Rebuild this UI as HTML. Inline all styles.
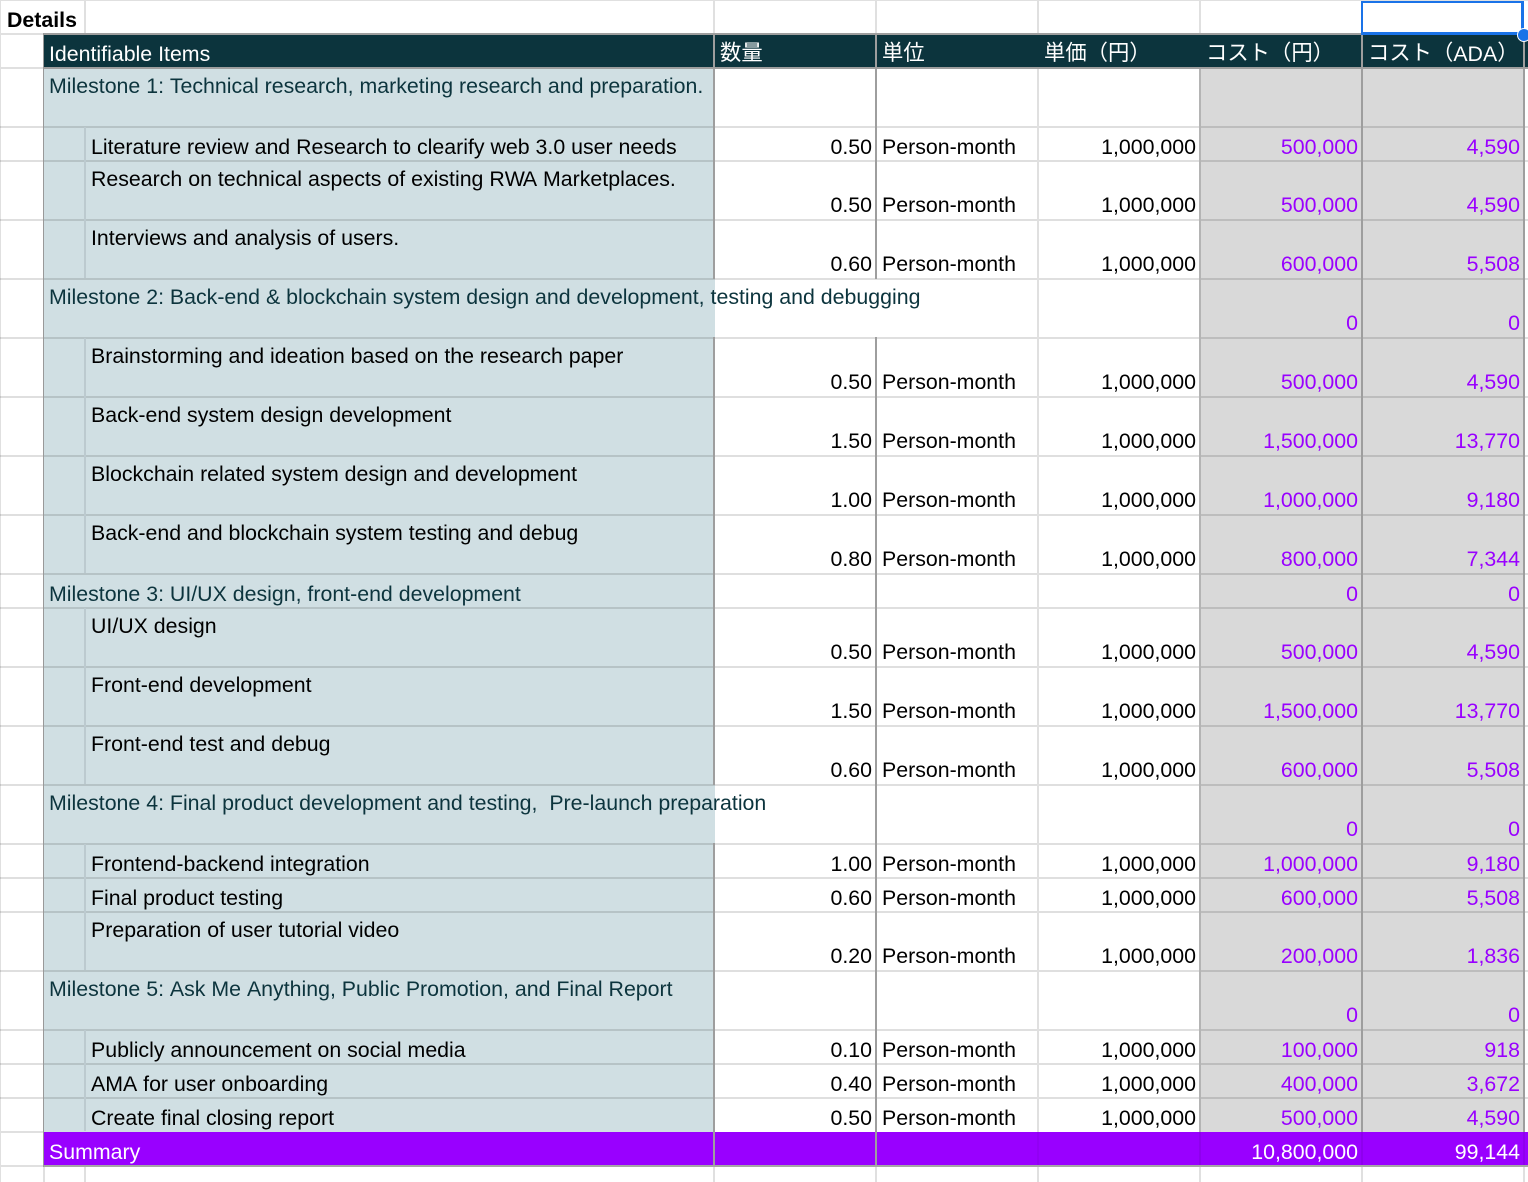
<!DOCTYPE html>
<html lang="ja"><head><meta charset="utf-8"><title>Details</title>
<style>
html,body{margin:0;padding:0;background:#fff}
#p{position:relative;width:1528px;height:1182px;overflow:hidden;background:#fff;font:21.33px/24px "Liberation Sans","Noto Sans CJK JP",sans-serif;color:#000;font-kerning:none}
.f,.v,.r,.r span,.h{position:absolute}
.r{left:0;width:1528px;box-sizing:border-box;border-top:2px solid rgba(0,0,0,.125)}
.r span{white-space:nowrap;bottom:2px}
.r.s span{bottom:1px}
.r .t{bottom:auto;top:5px}
.k{font-weight:normal;letter-spacing:-2.5px}
.a{left:91px}.m{left:49px;color:#0c343d}
.q{right:656px}.u{left:882px}.y{right:332px}
.c{right:170px;color:#90f}.d{right:8px;color:#90f}
.v{width:2px;background:#9e9e9e}
.l{background:#e0e0e0}
.g{background:#b4b4b4}
.h{color:#fff;top:41px;white-space:nowrap}
</style></head><body><div id="p">
<div class="f" style="left:44px;top:68px;width:671px;height:1064px;background:#d0dfe3"></div>
<div class="f" style="left:1200px;top:68px;width:325px;height:1064px;background:#d9d9d9"></div>
<div class="f" style="left:44px;top:35px;width:1484px;height:32px;background:#0c343d"></div>

<div class="v l" style="left:0;top:0;height:1182px;width:1px"></div>
<div class="f" style="left:0;top:0;width:1528px;height:1px;background:#e0e0e0"></div>
<div class="f" style="left:0;top:33px;width:43px;height:2px;background:#e0e0e0"></div>
<div class="f" style="left:0;top:67px;width:43px;height:2px;background:#e0e0e0"></div>

<div class="r s" style="top:126px;height:34px"><span class="a b">Literature review and Research to clearify web 3.0 user needs</span><span class="q">0.50</span><span class="u">Person-month</span><span class="y">1,000,000</span><span class="c">500,000</span><span class="d">4,590</span></div>
<div class="r" style="top:160px;height:59px"><span class="a t">Research on technical aspects of existing R<b class="k" style="letter-spacing:-2px">W</b>A Marketplaces.</span><span class="q">0.50</span><span class="u">Person-month</span><span class="y">1,000,000</span><span class="c">500,000</span><span class="d">4,590</span></div>
<div class="r" style="top:219px;height:59px"><span class="a t">Interviews and analysis of users.</span><span class="q">0.60</span><span class="u">Person-month</span><span class="y">1,000,000</span><span class="c">600,000</span><span class="d">5,508</span></div>
<div class="r" style="top:278px;height:59px"><span class="m t">Milestone 2: Back-end &amp; blockchain system design and development, testing and debugging</span><span class="c">0</span><span class="d">0</span></div>
<div class="r" style="top:337px;height:59px"><span class="a t">Brainstorming and ideation based on the research paper</span><span class="q">0.50</span><span class="u">Person-month</span><span class="y">1,000,000</span><span class="c">500,000</span><span class="d">4,590</span></div>
<div class="r" style="top:396px;height:59px"><span class="a t">Back-end system design development</span><span class="q">1.50</span><span class="u">Person-month</span><span class="y">1,000,000</span><span class="c">1,500,000</span><span class="d">13,770</span></div>
<div class="r" style="top:455px;height:59px"><span class="a t">Blockchain related system design and development</span><span class="q">1.00</span><span class="u">Person-month</span><span class="y">1,000,000</span><span class="c">1,000,000</span><span class="d">9,180</span></div>
<div class="r" style="top:514px;height:59px"><span class="a t">Back-end and blockchain system testing and debug</span><span class="q">0.80</span><span class="u">Person-month</span><span class="y">1,000,000</span><span class="c">800,000</span><span class="d">7,344</span></div>
<div class="r s" style="top:573px;height:34px"><span class="m">Milestone 3: UI/UX design, front-end development</span><span class="c">0</span><span class="d">0</span></div>
<div class="r" style="top:607px;height:59px"><span class="a t">UI/UX design</span><span class="q">0.50</span><span class="u">Person-month</span><span class="y">1,000,000</span><span class="c">500,000</span><span class="d">4,590</span></div>
<div class="r" style="top:666px;height:59px"><span class="a t">Front-end development</span><span class="q">1.50</span><span class="u">Person-month</span><span class="y">1,000,000</span><span class="c">1,500,000</span><span class="d">13,770</span></div>
<div class="r" style="top:725px;height:59px"><span class="a t">Front-end test and debug</span><span class="q">0.60</span><span class="u">Person-month</span><span class="y">1,000,000</span><span class="c">600,000</span><span class="d">5,508</span></div>
<div class="r" style="top:784px;height:59px"><span class="m t">Milestone 4: Final product development and testing,&nbsp; Pre-launch preparation</span><span class="c">0</span><span class="d">0</span></div>
<div class="r s" style="top:843px;height:34px"><span class="a">Frontend-backend integration</span><span class="q">1.00</span><span class="u">Person-month</span><span class="y">1,000,000</span><span class="c">1,000,000</span><span class="d">9,180</span></div>
<div class="r s" style="top:877px;height:34px"><span class="a">Final product testing</span><span class="q">0.60</span><span class="u">Person-month</span><span class="y">1,000,000</span><span class="c">600,000</span><span class="d">5,508</span></div>
<div class="r" style="top:911px;height:59px"><span class="a t">Preparation of user tutorial video</span><span class="q">0.20</span><span class="u">Person-month</span><span class="y">1,000,000</span><span class="c">200,000</span><span class="d">1,836</span></div>
<div class="r" style="top:970px;height:59px"><span class="m t">Milestone 5: Ask Me Anything, Public Promotion, and Final Report</span><span class="c">0</span><span class="d">0</span></div>
<div class="r s" style="top:1029px;height:34px"><span class="a">Publicly announcement on social media</span><span class="q">0.10</span><span class="u">Person-month</span><span class="y">1,000,000</span><span class="c">100,000</span><span class="d">918</span></div>
<div class="r s" style="top:1063px;height:34px"><span class="a">AMA for user onboarding</span><span class="q">0.40</span><span class="u">Person-month</span><span class="y">1,000,000</span><span class="c">400,000</span><span class="d">3,672</span></div>
<div class="r s" style="top:1097px;height:34px"><span class="a">Create final closing report</span><span class="q">0.50</span><span class="u">Person-month</span><span class="y">1,000,000</span><span class="c">500,000</span><span class="d">4,590</span></div>
<div class="r" style="top:67px;height:59px;border-top-color:transparent"><span class="m t">Milestone 1: <b class="k">T</b>echnical research, marketing research and preparation.</span></div>
<div class="f" style="left:0;top:1131px;width:44px;height:2px;background:#e0e0e0"></div>
<div class="f" style="left:0;top:1165px;width:43px;height:2px;background:#e0e0e0"></div>

<div class="f" style="left:44px;top:1132px;width:1484px;height:33px;background:#90f"></div>

<div class="v l" style="left:84px;top:0;height:33px"></div>
<div class="v l" style="left:713px;top:0;height:33px"></div>
<div class="v l" style="left:875px;top:0;height:33px"></div>
<div class="v l" style="left:1037px;top:0;height:33px"></div>
<div class="v l" style="left:1199px;top:0;height:33px"></div>
<div class="v l" style="left:43px;top:1167px;height:15px"></div>
<div class="v l" style="left:84px;top:1167px;height:15px"></div>
<div class="v l" style="left:713px;top:1167px;height:15px"></div>
<div class="v l" style="left:875px;top:1167px;height:15px"></div>
<div class="v l" style="left:1037px;top:1167px;height:15px"></div>
<div class="v l" style="left:1199px;top:1167px;height:15px"></div>
<div class="v l" style="left:1361px;top:1167px;height:15px"></div>
<div class="v l" style="left:1523px;top:1167px;height:15px"></div>

<div class="v" style="left:84px;top:127px;height:151px;background:#bccacf"></div>
<div class="v" style="left:84px;top:338px;height:235px;background:#bccacf"></div>
<div class="v" style="left:84px;top:608px;height:176px;background:#bccacf"></div>
<div class="v" style="left:84px;top:844px;height:126px;background:#bccacf"></div>
<div class="v" style="left:84px;top:1030px;height:101px;background:#bccacf"></div>

<div class="v" style="left:713px;top:33px;height:246px"></div>
<div class="v" style="left:713px;top:337px;height:448px"></div>
<div class="v" style="left:713px;top:843px;height:324px"></div>
<div class="v" style="left:875px;top:33px;height:246px"></div>
<div class="v" style="left:875px;top:337px;height:830px"></div>
<div class="v l" style="left:1037px;top:69px;height:1063px"></div>
<div class="v g" style="left:1199px;top:69px;height:1063px"></div>
<div class="v" style="left:1361px;top:33px;height:1099px"></div>
<div class="v" style="left:1523px;top:33px;height:1099px"></div>
<div class="v" style="left:1199px;top:1132px;height:33px;background:#8e00ee"></div>
<div class="v" style="left:1361px;top:1132px;height:33px;background:#8e00ee"></div>
<div class="v" style="left:1523px;top:1132px;height:33px;background:#8e00ee"></div>
<div class="v" style="left:1037px;top:1132px;height:33px;background:#9200f4"></div>

<div class="f" style="left:43px;top:33px;width:1485px;height:2px;background:#9e9e9e"></div>
<div class="f" style="left:44px;top:67px;width:1484px;height:2px;background:#9e9e9e"></div>
<div class="f" style="left:43px;top:1165px;width:1485px;height:2px;background:#a6a6a6"></div>
<div class="v" style="left:43px;top:33px;height:1134px;width:1px;background:#999"></div>

<div class="h" style="left:7px;top:8px;color:#000;font-weight:bold">Details</div>
<div class="h" style="left:49px;top:42px">Identifiable Items</div>
<div class="h" style="left:720px">数量</div>
<div class="h" style="left:882px">単位</div>
<div class="h" style="left:1044px">単価（円）</div>
<div class="h" style="left:1206px">コスト（円）</div>
<div class="h" style="left:1368px">コスト（<span style="position:relative;top:1px">ADA</span>）</div>
<div class="h" style="left:49px;top:1140px">Summary</div>
<div class="h" style="right:170px;top:1140px">10,800,000</div>
<div class="h" style="right:8px;top:1140px">99,144</div>

<div class="f" style="left:1361px;top:1px;width:163px;height:34px;box-sizing:border-box;border:solid #1a73e8;border-width:2px 3px 3px 2px"></div>
<div class="f" style="left:1517px;top:28px;width:12px;height:12px;border:1px solid #fff;border-radius:50%;background:#1a73e8"></div>
</div></body></html>
